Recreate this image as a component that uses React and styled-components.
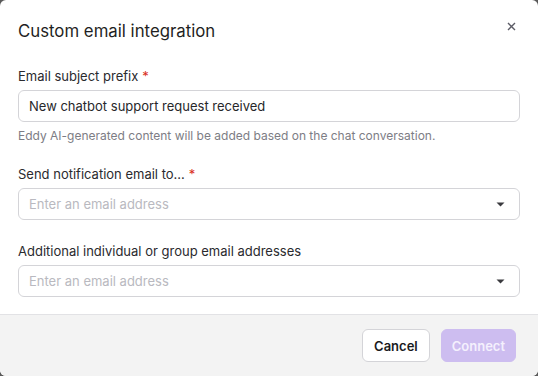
import styled, { createGlobalStyle } from "styled-components";

const Global = createGlobalStyle`
  html, body {
    margin: 0;
    padding: 0;
    background: #5a5a5a;
  }
  body {
    font-family: Inter, "Noto Sans", sans-serif;
  }
`;

const Dialog = styled.div`
  width: 538px;
  height: 376px;
  background: #fff;
  border-radius: 6px;
  overflow: hidden;
  display: flex;
  flex-direction: column;
  box-sizing: border-box;
`;

const Header = styled.div`
  display: flex;
  justify-content: space-between;
  align-items: flex-start;
  padding: 19px 20px 0 18px;
`;

const Title = styled.h2`
  margin: 0;
  font-size: 16.8px;
  font-weight: 400;
  color: #1f1f23;
  line-height: 24px;
`;

const Close = styled.button`
  border: none;
  background: none;
  padding: 0;
  width: 14px;
  height: 14px;
  display: flex;
  align-items: center;
  justify-content: center;
  cursor: pointer;
`;

const Body = styled.div`
  flex: 1;
  padding: 24px 18px 0 18px;
  display: flex;
  flex-direction: column;
`;

const Field = styled.div`
  display: flex;
  flex-direction: column;
  margin-bottom: ${(p) => p.$gap || 0}px;
`;

const Label = styled.label`
  font-size: 13px;
  color: #2a2a2e;
  line-height: 18px;
  margin-bottom: 5px;
`;

const Star = styled.span`
  color: #d92d20;
  margin-left: 4px;
`;

const Box = styled.div`
  height: 32px;
  box-sizing: border-box;
  border: 1px solid #d4d4d8;
  border-radius: 6px;
  display: flex;
  align-items: center;
  justify-content: space-between;
  padding: 0 14px 0 10px;
  font-size: 13px;
  color: ${(p) => (p.$placeholder ? "#b9b9c0" : "#27272a")};
`;

const Helper = styled.div`
  font-size: 12px;
  color: #7d7d85;
  margin-top: 6px;
  line-height: 16px;
`;

const Caret = () => (
  <svg width="9" height="5" viewBox="0 0 9 5">
    <path d="M0.5 0.5h8L4.5 4.5z" fill="#3a3a3f" />
  </svg>
);

const Footer = styled.div`
  height: 62px;
  background: #f3f3f3;
  border-top: 1px solid #e2e2e5;
  display: flex;
  justify-content: flex-end;
  align-items: center;
  gap: 11px;
  padding: 0 22px 0 0;
  box-sizing: border-box;
`;

const Button = styled.button`
  height: 33px;
  border-radius: 6px;
  font-family: inherit;
  font-size: 13px;
  font-weight: 600;
  padding: 0 ${(p) => (p.$primary ? 10 : 11)}px;
  border: 1px solid ${(p) => (p.$primary ? "#cdbdf0" : "#d4d4d8")};
  background: ${(p) => (p.$primary ? "#cdbdf0" : "#fff")};
  color: ${(p) => (p.$primary ? "#f4f0fd" : "#1a1a1d")};
`;

export default function App() {
  return (
    <>
      <Global />
      <Dialog>
        <Header>
          <Title>Custom email integration</Title>
          <Close aria-label="Close">
            <svg width="9" height="9" viewBox="0 0 9 9">
              <path d="M1 1l7 7M8 1l-7 7" stroke="#5c5c66" strokeWidth="1.4" />
            </svg>
          </Close>
        </Header>
        <Body>
          <Field $gap={21}>
            <Label>
              Email subject prefix<Star>*</Star>
            </Label>
            <Box>New chatbot support request received</Box>
            <Helper>Eddy AI-generated content will be added based on the chat conversation.</Helper>
          </Field>
          <Field $gap={22}>
            <Label>
              Send notification email to...<Star>*</Star>
            </Label>
            <Box $placeholder>
              Enter an email address
              <Caret />
            </Box>
          </Field>
          <Field>
            <Label>Additional individual or group email addresses</Label>
            <Box $placeholder>
              Enter an email address
              <Caret />
            </Box>
          </Field>
        </Body>
        <Footer>
          <Button>Cancel</Button>
          <Button $primary>Connect</Button>
        </Footer>
      </Dialog>
    </>
  );
}
